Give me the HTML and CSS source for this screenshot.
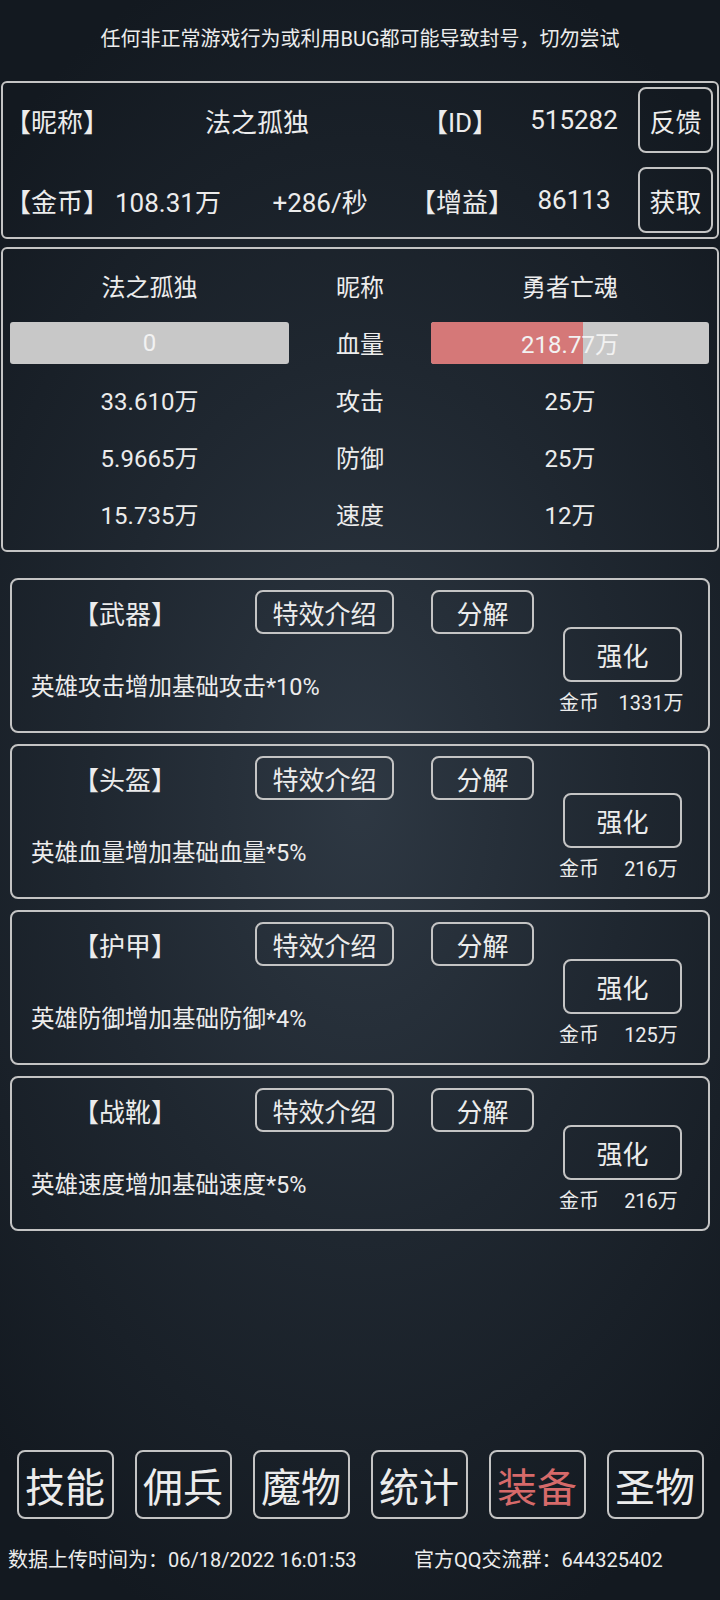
FILE: index.html
```html
<!DOCTYPE html>
<html lang="zh-CN">

<head>
    <meta charset="UTF-8" />
    <meta name="viewport" content="width=device-width, initial-scale=1" />
    <title>装备</title>
    <link rel="stylesheet" href="styles.css">
</head>

<body>

    <!-- Warning -->
    <div class="notice">任何非正常游戏行为或利用BUG都可能导致封号，切勿尝试</div>

    <!-- Player info -->
    <div class="panel info-panel">
        <div class="info-row">
            <div class="label">【昵称】</div>
            <div class="mid name">法之孤独</div>
            <div class="label2">【ID】</div>
            <div class="value">515282</div>
            <button class="btn side-btn">反馈</button>
        </div>
        <div class="info-row">
            <div class="label">【金币】</div>
            <div class="mid gold">
                <span>108.31万</span>
                <span class="rate">+286/秒</span>
            </div>
            <div class="label2">【增益】</div>
            <div class="value">86113</div>
            <button class="btn side-btn">获取</button>
        </div>
    </div>

    <!-- Battle compare -->
    <div class="panel battle-panel">
        <div class="cell">法之孤独</div>
        <div class="cell">昵称</div>
        <div class="cell">勇者亡魂</div>

        <div class="cell"><div class="bar"><span>0</span></div></div>
        <div class="cell">血量</div>
        <div class="cell"><div class="bar"><div class="bar-fill" style="width: 54.7%"></div><span>218.77万</span></div></div>

        <div class="cell">33.610万</div>
        <div class="cell">攻击</div>
        <div class="cell">25万</div>

        <div class="cell">5.9665万</div>
        <div class="cell">防御</div>
        <div class="cell">25万</div>

        <div class="cell">15.735万</div>
        <div class="cell">速度</div>
        <div class="cell">12万</div>
    </div>

    <!-- Equipment -->
    <div class="equip-list">
        <div class="card">
            <div class="card-main">
                <div class="card-head">
                    <span class="slot">【武器】</span>
                    <button class="btn btn-intro">特效介绍</button>
                    <button class="btn btn-split">分解</button>
                </div>
                <div class="desc">英雄攻击增加基础攻击*10%</div>
            </div>
            <div class="card-side">
                <button class="btn btn-up">强化</button>
                <div class="cost"><span class="coin">金币</span><span class="price">1331万</span></div>
            </div>
        </div>

        <div class="card">
            <div class="card-main">
                <div class="card-head">
                    <span class="slot">【头盔】</span>
                    <button class="btn btn-intro">特效介绍</button>
                    <button class="btn btn-split">分解</button>
                </div>
                <div class="desc">英雄血量增加基础血量*5%</div>
            </div>
            <div class="card-side">
                <button class="btn btn-up">强化</button>
                <div class="cost"><span class="coin">金币</span><span class="price">216万</span></div>
            </div>
        </div>

        <div class="card">
            <div class="card-main">
                <div class="card-head">
                    <span class="slot">【护甲】</span>
                    <button class="btn btn-intro">特效介绍</button>
                    <button class="btn btn-split">分解</button>
                </div>
                <div class="desc">英雄防御增加基础防御*4%</div>
            </div>
            <div class="card-side">
                <button class="btn btn-up">强化</button>
                <div class="cost"><span class="coin">金币</span><span class="price">125万</span></div>
            </div>
        </div>

        <div class="card">
            <div class="card-main">
                <div class="card-head">
                    <span class="slot">【战靴】</span>
                    <button class="btn btn-intro">特效介绍</button>
                    <button class="btn btn-split">分解</button>
                </div>
                <div class="desc">英雄速度增加基础速度*5%</div>
            </div>
            <div class="card-side">
                <button class="btn btn-up">强化</button>
                <div class="cost"><span class="coin">金币</span><span class="price">216万</span></div>
            </div>
        </div>
    </div>

    <!-- Bottom menu -->
    <nav class="menu">
        <button class="btn menu-btn">技能</button>
        <button class="btn menu-btn">佣兵</button>
        <button class="btn menu-btn">魔物</button>
        <button class="btn menu-btn">统计</button>
        <button class="btn menu-btn active">装备</button>
        <button class="btn menu-btn">圣物</button>
    </nav>

    <div class="footer">
        <span class="upload">数据上传时间为：06/18/2022 16:01:53</span>
        <span>官方QQ交流群：644325402</span>
    </div>

</body>

</html>
```

FILE: styles.css
```css
body {
    font-family: Roboto, "Noto Sans CJK SC", sans-serif;
    color: #ececec;
    margin: 0;
    width: 720px;
    min-height: 1600px;
    background: radial-gradient(ellipse 75% 55% at 50% 50%, #2e3843 0%, #1f2730 50%, #131920 100%);
    background-color: #131920;
}

.notice {
    height: 78px;
    line-height: 78px;
    text-align: center;
    font-size: 20px;
}

.panel {
    border: 2px solid #c4c4c4;
    border-radius: 6px;
    margin: 0 1px;
}

/* —— info panel —— */
.info-panel {
    margin-top: 3px;
    padding: 4px 4px 4px 2px;
    display: flex;
    flex-direction: column;
    gap: 14px;
}

.info-row {
    display: grid;
    grid-template-columns: 105px 300px 100px 128px 75px;
    align-items: center;
    height: 66px;
    font-size: 26px;
}

.name {
    text-align: center;
    padding-right: 6px;
}

.gold {
    padding-left: 5px;
}

.rate {
    margin-left: 45px;
}

.label2,
.value {
    text-align: center;
}

.btn {
    font-family: Roboto, "Noto Sans CJK SC", sans-serif;
    background: transparent;
    color: #ececec;
    border: 2px solid #c4c4c4;
    border-radius: 8px;
    padding: 0;
    cursor: pointer;
}

.side-btn {
    width: 75px;
    height: 66px;
    font-size: 26px;
}

/* —— battle panel —— */
.battle-panel {
    margin-top: 8px;
    padding: 8px 8px 8px 7px;
    display: grid;
    grid-template-columns: 279px 142px 278px;
    grid-auto-rows: 57px;
    font-size: 24px;
}

.cell {
    display: flex;
    align-items: center;
    justify-content: center;
}

.bar {
    position: relative;
    width: 100%;
    height: 42px;
    background-color: #c8c8c8;
    border-radius: 3px;
    overflow: hidden;
    display: flex;
    align-items: center;
    justify-content: center;
    color: #f2f2f2;
}

.bar-fill {
    position: absolute;
    left: 0;
    top: 0;
    bottom: 0;
    background-color: #d57878;
}

.bar span {
    position: relative;
}

/* —— equipment —— */
.equip-list {
    margin: 26px 10px 0;
    display: flex;
    flex-direction: column;
    gap: 11px;
}

.card {
    height: 155px;
    box-sizing: border-box;
    border: 2px solid #c4c4c4;
    border-radius: 8px;
    padding-top: 10px;
    display: flex;
}

.card-main {
    flex: 1;
}

.card-head {
    display: flex;
    align-items: center;
    height: 44px;
}

.slot {
    width: 226px;
    text-align: center;
    font-size: 26px;
}

.btn-intro,
.btn-split {
    height: 44px;
    font-size: 26px;
}

.btn-intro {
    width: 139px;
    margin-left: 17px;
}

.btn-split {
    width: 103px;
    margin-left: 37px;
}

.desc {
    margin-top: 38px;
    padding-left: 19px;
    line-height: 30px;
    font-size: 23.5px;
}

.card-side {
    width: 119px;
    margin: 37px 26px 0 0;
}

.btn-up {
    width: 119px;
    height: 55px;
    font-size: 26px;
}

.cost {
    display: flex;
    margin: 10px 0 0 -4px;
    line-height: 22px;
    font-size: 20px;
    white-space: nowrap;
}

.coin {
    flex-shrink: 0;
    width: 40px;
}

.price {
    flex-shrink: 0;
    width: 104px;
    text-align: center;
}

/* —— bottom menu —— */
.menu {
    margin-top: 219px;
    display: flex;
    justify-content: center;
    gap: 21px;
}

.menu-btn {
    width: 97px;
    height: 69px;
    font-size: 40px;
}

.menu-btn.active {
    color: #d66a6a;
}

.footer {
    margin-top: 20px;
    padding-left: 8px;
    display: flex;
    line-height: 42px;
    font-size: 20px;
}

.upload {
    width: 406px;
}
```
